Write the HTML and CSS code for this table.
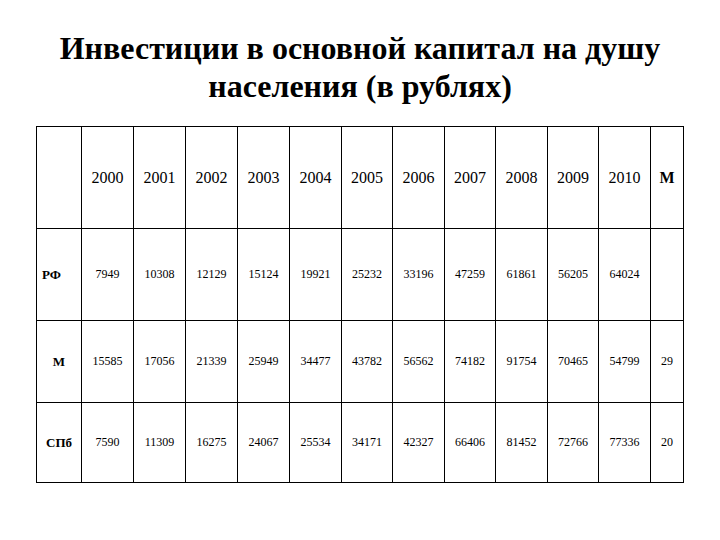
FILE: index.html
```html
<!DOCTYPE html>
<html lang="ru">
<head>
<meta charset="utf-8">
<title>Инвестиции в основной капитал на душу населения</title>
<link rel="stylesheet" href="styles.css">
</head>
<body>
<div class="title">Инвестиции в основной капитал на душу<br>населения (в рублях)</div>
<table class="grid">
<colgroup>
<col class="c-label">
<col class="c-w"><col class="c-w"><col class="c-w"><col class="c-w"><col class="c-w">
<col class="c-n"><col class="c-w"><col class="c-n"><col class="c-w"><col class="c-n"><col class="c-w">
<col class="c-last">
</colgroup>
<tr class="r-head">
<td></td>
<td class="yr">2000</td><td class="yr">2001</td><td class="yr">2002</td><td class="yr">2003</td><td class="yr">2004</td><td class="yr">2005</td><td class="yr">2006</td><td class="yr">2007</td><td class="yr">2008</td><td class="yr">2009</td><td class="yr">2010</td><td class="yr lbl">М</td>
</tr>
<tr class="r-rf">
<td class="lbl left">РФ</td>
<td>7949</td><td>10308</td><td>12129</td><td>15124</td><td>19921</td><td>25232</td><td>33196</td><td>47259</td><td>61861</td><td>56205</td><td>64024</td><td></td>
</tr>
<tr class="r-m">
<td class="lbl">М</td>
<td>15585</td><td>17056</td><td>21339</td><td>25949</td><td>34477</td><td>43782</td><td>56562</td><td>74182</td><td>91754</td><td>70465</td><td>54799</td><td>29</td>
</tr>
<tr class="r-spb">
<td class="lbl">СПб</td>
<td>7590</td><td>11309</td><td>16275</td><td>24067</td><td>25534</td><td>34171</td><td>42327</td><td>66406</td><td>81452</td><td>72766</td><td>77336</td><td>20</td>
</tr>
</table>
</body>
</html>
```
FILE: styles.css
```css
html, body {
  margin: 0;
  padding: 0;
  background: #fff;
}
body {
  font-family: "Liberation Serif", "Times New Roman", serif;
  color: #000;
}
.title {
  margin: 29px 0 0 0;
  font-family: "Liberation Serif", "Times New Roman", serif;
  font-size: 32px;
  line-height: 38px;
  font-weight: bold;
  text-align: center;
}
.grid {
  margin: 21px auto 0 auto;
  width: 647px;
  table-layout: fixed;
  border-collapse: collapse;
}
.c-label { width: 45px; }
.c-w { width: 52px; }
.c-n { width: 51px; }
.c-last { width: 33px; }
.grid td {
  border: 1px solid #000;
  padding: 0;
  text-align: center;
  vertical-align: middle;
  font-family: "Liberation Serif", "Times New Roman", serif;
  font-size: 12px;
}
.grid td.yr {
  font-size: 16px;
}
.grid td.lbl {
  font-weight: bold;
  font-size: 13px;
}
.grid td.yr.lbl {
  font-size: 16px;
}
.grid td.left {
  text-align: left;
  padding-left: 5px;
}
.r-head { height: 102px; }
.r-rf { height: 92px; }
.r-m { height: 82px; }
.r-spb { height: 80px; }
```
